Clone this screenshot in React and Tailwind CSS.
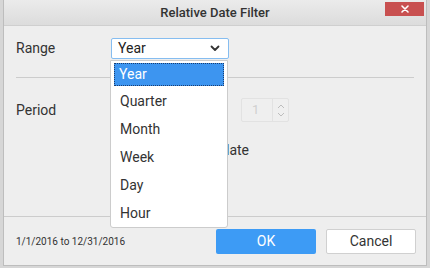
import React from "react";

export default function App() {
  const items = ["Year", "Quarter", "Month", "Week", "Day", "Hour"];
  return (
    <div
      className="relative w-[430px] h-[268px] bg-[#d6d6d6] overflow-hidden"
      style={{ fontFamily: "Roboto, 'Noto Sans', sans-serif" }}
    >
      {/* dialog */}
      <div className="absolute left-[3px] top-0 w-[424px] h-[266px] flex flex-col bg-[#eeeeee] border border-t-0 border-[#bdbdbd]">
        {/* title bar */}
        <div className="relative h-[26px] shrink-0 flex items-center justify-center bg-gradient-to-b from-[#ebebeb] to-[#dcdcdc] border-b border-[#cfcfcf]">
          <span className="text-[13px] font-medium text-[#333]">Relative Date Filter</span>
          <button className="absolute right-[2px] top-[2px] w-[39px] h-[14px] bg-[#c85050] flex items-center justify-center">
            <svg width="8" height="8" viewBox="0 0 8 8">
              <path d="M1 1L7 7M7 1L1 7" stroke="#fff" strokeWidth="1.6" strokeLinecap="round" />
            </svg>
          </button>
        </div>
        {/* body */}
        <div className="h-[190px] shrink-0 flex flex-col px-[12px]">
          <div className="flex items-center mt-[12px] h-[21px]">
            <span className="w-[95px] text-[14px] text-[#333]">Range</span>
            <div className="w-[118px] h-[21px] bg-white border border-[#86bdf0] rounded-[2px] flex items-center justify-between pl-[6px] pr-[8px]">
              <span className="text-[14px] text-[#222]">Year</span>
              <svg width="10" height="7" viewBox="0 0 10 7">
                <path d="M1.5 1.5L5 5L8.5 1.5" stroke="#333" strokeWidth="1.8" fill="none" strokeLinecap="round" strokeLinejoin="round" />
              </svg>
            </div>
          </div>
          <div className="mt-[18px] h-px bg-[#cccccc]" />
          <div className="flex items-center mt-[20px] h-[24px]">
            <span className="w-[225px] text-[14px] text-[#333]">Period</span>
            <div className="flex h-[24px] w-[48px] border border-[#e2e2e2] rounded-[2px] bg-[#efefef]">
              <div className="w-[30px] flex items-center pl-[10px] text-[13px] text-[#cfcfcf]">1</div>
              <div className="flex-1 border-l border-[#e2e2e2] flex flex-col items-center justify-center gap-[3px]">
                <svg width="8" height="5" viewBox="0 0 8 5">
                  <path d="M1 4L4 1L7 4" stroke="#bdbdbd" strokeWidth="1" fill="none" />
                </svg>
                <svg width="8" height="5" viewBox="0 0 8 5">
                  <path d="M1 1L4 4L7 1" stroke="#bdbdbd" strokeWidth="1" fill="none" />
                </svg>
              </div>
            </div>
          </div>
          <div className="flex items-center mt-[18px] h-[20px]">
            <div className="w-[233px] flex justify-end">
              <span className="text-[14px] text-[#333]">Anchor date</span>
            </div>
          </div>
        </div>
        {/* footer */}
        <div className="flex-1 border-t border-[#cccccc] flex items-center pl-[12px] pr-[10px]">
          <span className="flex-1 text-[10px] text-[#333]">1/1/2016 to 12/31/2016</span>
          <button className="w-[100px] h-[25px] bg-[#3d9bf5] rounded-[2px] text-white text-[14px] mr-[10px]">OK</button>
          <button className="w-[90px] h-[25px] bg-white border border-[#d0d0d0] rounded-[2px] text-[#333] text-[14px]">Cancel</button>
        </div>
      </div>

      {/* dropdown list overlay */}
      <div className="absolute left-[110px] top-[60px] w-[118px] h-[168px] bg-white border border-[#cccccc] rounded-b-[3px] pt-[2px] px-[3px]">
        {items.map((it, i) =>
          i === 0 ? (
            <div
              key={it}
              className="h-[23px] mb-[1px] bg-[#3d95f0] border border-dotted border-[#1a3d70] flex items-center pl-[4px] text-[14px] text-white"
            >
              {it}
            </div>
          ) : (
            <div key={it} className="h-[28px] flex items-center pl-[6px] text-[14px] text-[#333]">
              {it}
            </div>
          )
        )}
      </div>
    </div>
  );
}
